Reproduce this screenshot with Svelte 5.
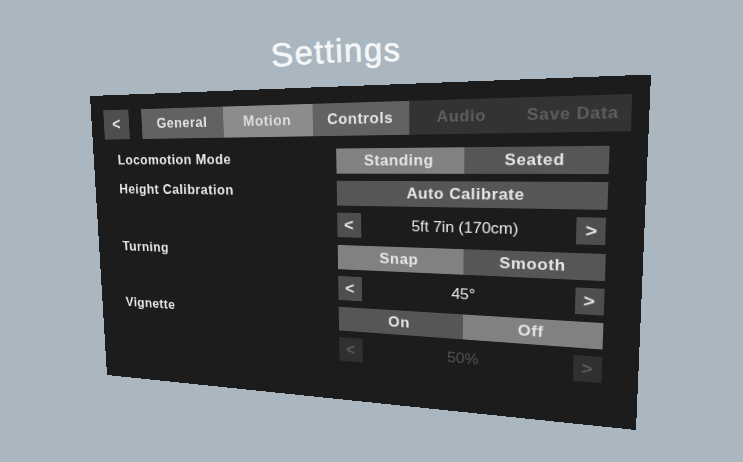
<script>
  const WIDTH = 640;
  const HEIGHT = 360;

  // screen corners of the panel: top left, top right, bottom right, bottom left
  const corners = [[90, 96], [651, 74.5], [636, 430], [107, 375]];

  function quadMatrix([[x0, y0], [x1, y1], [x2, y2], [x3, y3]], w, h) {
    const dx1 = x1 - x2, dx2 = x3 - x2, dx3 = x0 - x1 + x2 - x3;
    const dy1 = y1 - y2, dy2 = y3 - y2, dy3 = y0 - y1 + y2 - y3;
    const det = dx1 * dy2 - dx2 * dy1;
    const g = (dx3 * dy2 - dx2 * dy3) / det;
    const k = (dx1 * dy3 - dx3 * dy1) / det;
    const a = x1 - x0 + g * x1, b = x3 - x0 + k * x3;
    const d = y1 - y0 + g * y1, e = y3 - y0 + k * y3;
    return `matrix3d(${a / w},${d / w},0,${g / w},${b / h},${e / h},0,${k / h},0,0,1,0,${x0},${y0},0,1)`;
  }

  const panelTransform = quadMatrix(corners, WIDTH, HEIGHT);

  const tabs = [
    { label: "General", state: "" },
    { label: "Motion", state: "active" },
    { label: "Controls", state: "" },
    { label: "Audio", state: "disabled" },
    { label: "Save Data", state: "disabled" }
  ];
</script>

<div class="scene">
  <svg class="title" width="743" height="100" viewBox="0 0 743 100">
    <defs>
      <path id="title-arc" d="M 262 68 Q 336 60 412 61" fill="none" />
    </defs>
    <text><textPath href="#title-arc" startOffset="10">Settings</textPath></text>
  </svg>

  <div class="panel" style="transform: {panelTransform}">
    <div class="tabbar">
      <button class="btn back">&lt;</button>
      <div class="tabs">
        {#each tabs as tab}
          <button class="btn tab {tab.state}">{tab.label}</button>
        {/each}
      </div>
    </div>

    <div class="rows">
      <div class="label">Locomotion Mode</div>
      <div class="segments">
        <button class="btn seg on">Standing</button>
        <button class="btn seg">Seated</button>
      </div>

      <div class="label">Height Calibration</div>
      <button class="btn seg">Auto Calibrate</button>

      <div></div>
      <div class="stepper">
        <button class="btn step">&lt;</button>
        <span>5ft 7in (170cm)</span>
        <button class="btn step">&gt;</button>
      </div>

      <div class="label">Turning</div>
      <div class="segments">
        <button class="btn seg on">Snap</button>
        <button class="btn seg">Smooth</button>
      </div>

      <div></div>
      <div class="stepper">
        <button class="btn step">&lt;</button>
        <span>45°</span>
        <button class="btn step">&gt;</button>
      </div>

      <div class="label">Vignette</div>
      <div class="segments">
        <button class="btn seg">On</button>
        <button class="btn seg on">Off</button>
      </div>

      <div></div>
      <div class="stepper disabled">
        <button class="btn step">&lt;</button>
        <span>50%</span>
        <button class="btn step">&gt;</button>
      </div>
    </div>
  </div>
</div>

<style>
  :global(body) {
    background: #aab6c0;
    overflow: hidden;
  }
  .scene {
    position: relative;
    width: 743px;
    height: 462px;
    overflow: hidden;
    font-family: "Liberation Sans", Arial, sans-serif;
  }
  .title {
    position: absolute;
    left: 0;
    top: 0;
  }
  .title text {
    font-family: "Liberation Sans", Arial, sans-serif;
    font-size: 33px;
    letter-spacing: 1.3px;
    fill: #f4f6f7;
    stroke: #f4f6f7;
    stroke-width: 0.6px;
  }
  .panel {
    position: absolute;
    left: 0;
    top: 0;
    width: 640px;
    height: 360px;
    box-sizing: border-box;
    padding: 17.5px 36px 0 18px;
    background: #1c1c1c;
    transform-origin: 0 0;
    color: #eee;
  }
  .btn {
    display: flex;
    align-items: center;
    justify-content: center;
    margin: 0;
    padding: 0;
    border: 0;
    border-radius: 0;
    font: inherit;
    font-weight: 700;
    color: #e6e6e6;
    background: #565656;
  }
  .tabbar {
    display: flex;
    align-items: stretch;
    gap: 18px;
    height: 36px;
    margin-right: -20px;
  }
  .back {
    flex: 0 0 35.5px;
    font-size: 20px;
    background: #4e4e4e;
  }
  .tabs {
    flex: 1;
    display: grid;
    grid-template-columns: repeat(5, 1fr);
  }
  .tab {
    font-size: 17px;
    letter-spacing: 0.7px;
    background: #626262;
  }
  .tab.active {
    background: #8c8c8c;
    color: #dedede;
  }
  .tab.disabled {
    background: #333;
    color: #5e5e5e;
  }
  .rows {
    display: grid;
    grid-template-columns: 301.5px 285px;
    grid-auto-rows: 28px;
    row-gap: 8.2px;
    margin-top: 14.5px;
  }
  .label {
    padding: 0 0 5px 17px;
    align-self: center;
    font-size: 17px;
    font-weight: 700;
    letter-spacing: 0.6px;
    color: #e8e8e8;
  }
  .segments {
    display: grid;
    grid-template-columns: 1fr 1fr;
  }
  .seg {
    font-size: 17px;
    letter-spacing: 0.6px;
  }
  .seg.on {
    background: #818181;
  }
  .stepper {
    display: flex;
    align-items: center;
    justify-content: space-between;
    font-size: 17px;
    color: #eaeaea;
  }
  .step {
    width: 28px;
    height: 28px;
    font-size: 19px;
    background: #4e4e4e;
  }
  .stepper.disabled {
    color: #555;
  }
  .stepper.disabled .step {
    background: #303030;
    color: #5c5c5c;
  }
</style>
